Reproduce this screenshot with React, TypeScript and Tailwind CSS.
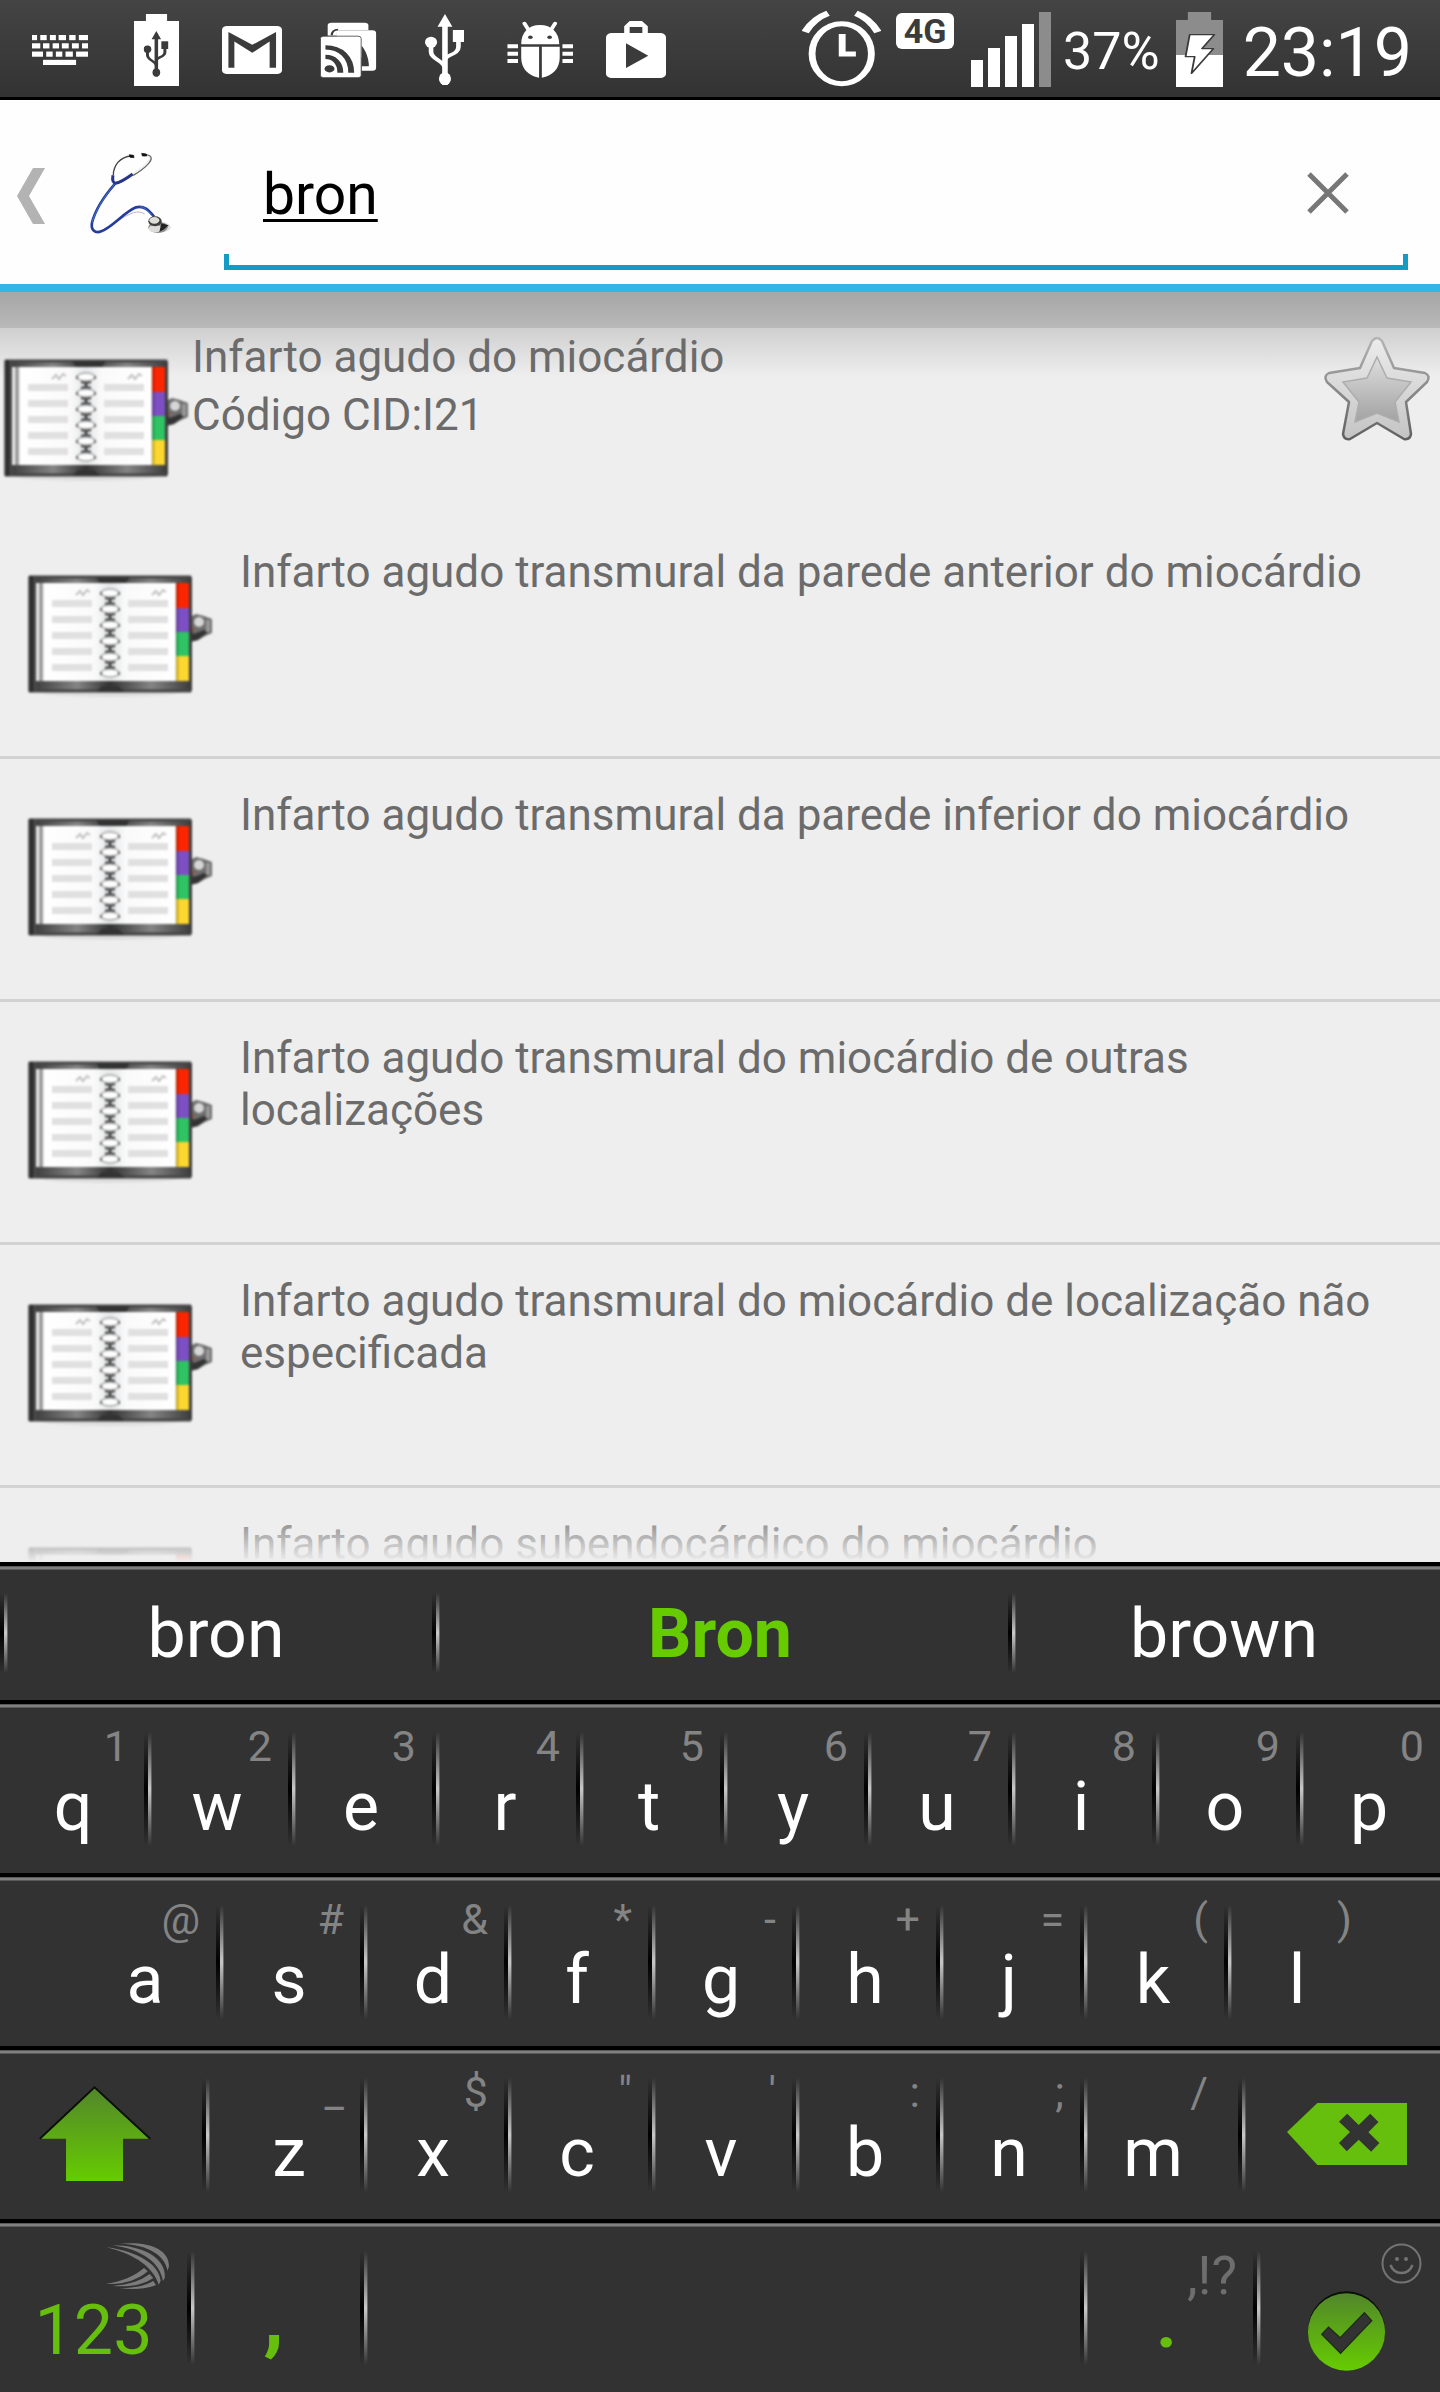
import React from "react";

/* ---------- status bar icons ---------- */

function KeyboardIcon() {
  const rows: [number, number[][]][] = [
    [108, [[70, 81], [88, 102], [109, 122], [128, 144], [151, 165], [172, 192]]],
    [132, [[70, 88], [94, 108], [115, 129], [135, 150], [157, 172], [179, 192]]],
    [156, [[70, 94], [101, 115], [122, 136], [143, 159], [166, 192]]],
    [180, [[94, 166]]],
  ];
  return (
    <svg className="h-[30px] w-14" viewBox="70 108 122 87" preserveAspectRatio="none" fill="#fff" aria-hidden="true">
      {rows.map(([y, keys]) => keys.map(([a, b]) => <rect key={`${y}-${a}`} x={a} y={y} width={b - a} height="15" />))}
    </svg>
  );
}

function UsbShape() {
  return (
    <>
      <path d="M965 45l16 38h-10v175h-12V83h-10z" fill="currentColor" />
      <path d="M935 140v18c0 22 28 28 30 48M994 120v24c0 24-28 22-29 38" fill="none" stroke="currentColor" strokeWidth="10" />
      <ellipse cx="935" cy="130" rx="13" ry="17" fill="currentColor" />
      <rect x="982" y="93" width="24" height="36" fill="currentColor" />
      <ellipse cx="965" cy="239" rx="13" ry="19" fill="currentColor" />
    </>
  );
}

function BatteryUsbIcon() {
  return (
    <svg className="h-[72px] w-[45px]" viewBox="290 39 98 216" preserveAspectRatio="none" aria-hidden="true">
      <path d="M316 39h46v21h26v195h-98V60h26z" fill="#fff" />
      <svg x="311" y="90" width="54" height="137" viewBox="922 45 84 213" preserveAspectRatio="none" color="#3b3b3b">
        <UsbShape />
      </svg>
    </svg>
  );
}

function UsbIcon() {
  return (
    <svg className="h-[71px] w-[39px]" viewBox="922 45 84 213" preserveAspectRatio="none" color="#fff" aria-hidden="true">
      <UsbShape />
    </svg>
  );
}

function MailIcon() {
  return (
    <svg className="h-12 w-[60px]" viewBox="483 78 131 145" preserveAspectRatio="none" aria-hidden="true">
      <rect x="483" y="78" width="131" height="145" rx="11" fill="#fff" />
      <path d="M497 96l52 39 52-39v108h-14v-79l-38 34-39-34v79h-13z" fill="#3b3b3b" />
    </svg>
  );
}

function FeedIcon() {
  return (
    <svg className="h-14 w-[57px]" viewBox="696 68 126 170" preserveAspectRatio="none" aria-hidden="true">
      <path d="M713 110V78q0-8 8-8h74q8 0 8 8v14h-60q-10 0-10 10v8z" fill="#fff" />
      <path d="M722 108c0-10 5-17 14-17" fill="none" stroke="#3b3b3b" strokeWidth="5" />
      <path d="M732 110v-8q0-9 8-9h72q8 0 8 9v105q0 9-8 9h-24v-40z" fill="#fff" />
      <path d="M788 140c10 16 16 40 16 62h-16z" fill="#3b3b3b" />
      <rect x="697" y="111" width="90" height="126" rx="7" fill="#fff" stroke="#3b3b3b" strokeWidth="2" />
      <circle cx="717" cy="210" r="11" fill="#3b3b3b" />
      <path d="M708 174c19 0 33 18 33 48M708 145c34 0 57 30 57 77" fill="none" stroke="#3b3b3b" strokeWidth="13" />
    </svg>
  );
}

function BugIcon() {
  return (
    <svg className="h-[57px] w-[66px]" viewBox="1104 62 144 172" preserveAspectRatio="none" fill="#fff" aria-hidden="true">
      <path d="M1142 69l10 22M1209 69l-10 22" stroke="#fff" strokeWidth="9" strokeLinecap="round" />
      <path d="M1135 132c0-36 16-58 41-58s42 22 42 58zM1135 140h39v93c-24-6-39-28-39-60zM1180 140h39v33c0 32-15 54-39 60z" />
      <circle cx="1155" cy="111" r="5" fill="#3b3b3b" />
      <circle cx="1197" cy="111" r="5" fill="#3b3b3b" />
      {[132, 155, 177].map((y) => (
        <path key={y} d={`M1105 ${y}h23v12h-23zM1225 ${y}h23v12h-23z`} />
      ))}
    </svg>
  );
}

function StoreIcon() {
  return (
    <svg className="h-[57px] w-[60px]" viewBox="1319 60 132 171" preserveAspectRatio="none" aria-hidden="true">
      <path d="M1359 96V76l12-16h27l13 16v20h-12V78h-28v18z" fill="#fff" />
      <rect x="1319" y="96" width="132" height="135" rx="13" fill="#fff" />
      <path d="M1363 127l49 37-49 37z" fill="#3b3b3b" />
    </svg>
  );
}

function AlarmIcon() {
  return (
    <svg className="mt-[10px] h-[77px] w-[79px]" viewBox="174 30 173 231" preserveAspectRatio="none" fill="none" stroke="#fff" aria-hidden="true">
      <ellipse cx="261" cy="161" rx="65" ry="90" strokeWidth="15" />
      <path d="M231 40c-20 10-38 30-50 56M292 40c20 10 36 30 48 56" strokeWidth="17" />
      <path d="M262 102v60h30" strokeWidth="15" />
    </svg>
  );
}

function SignalIcon() {
  return (
    <svg className="mt-3 h-[75px] w-20" viewBox="0 0 80 75" fill="#fff" aria-hidden="true">
      <rect x="0" y="48" width="12" height="27" />
      <rect x="17" y="36" width="12" height="39" />
      <rect x="34" y="24" width="12" height="51" />
      <rect x="51" y="12" width="12" height="63" />
      <rect x="68" y="0" width="12" height="75" fill="#8c8c8c" />
    </svg>
  );
}

function BatteryIcon() {
  return (
    <svg className="mt-3 h-[75px] w-[47px]" viewBox="992 36 103 225" preserveAspectRatio="none" aria-hidden="true">
      <path d="M1018 36h51v24h26v105H992V60h26z" fill="#8c8c8c" />
      <rect x="992" y="165" width="103" height="96" fill="#fff" />
      <path d="M1022 104h54l-27 42h25l-48 74 7-50h-20z" fill="#fff" stroke="#3b3b3b" strokeWidth="4" strokeLinejoin="round" />
    </svg>
  );
}

/* ---------- content icons ---------- */

function Stethoscope() {
  return (
    <svg className="h-[85px] w-[84px]" viewBox="264 152 252 255" fill="none" aria-hidden="true">
      <ellipse cx="484" cy="384" rx="28" ry="15" fill="#000" opacity=".12" />
      <path d="M340 228c0-28 18-56 55-58" stroke="#444" strokeWidth="4" />
      <path d="M432 166c22 0 28 10 14 26-12 14-26 24-46 36" stroke="#666" strokeWidth="4" />
      <path d="M432 170c18-1 20 6 10 18-12 14-24 22-42 34" stroke="#ddd" strokeWidth="2" />
      <path d="M388 166l13 2 1 7-12-1zM425 162l14 2 1 6-13 0z" fill="#111" stroke="#111" strokeWidth="2" />
      <path d="M339 228c-3 16 0 20 7 25M346 252c16-2 30-12 52-28" stroke="#26358a" strokeWidth="9" />
      <path d="M308 392c30-12 56-40 92-52 14-4 24-2 34 4" stroke="#b9b4cc" strokeWidth="3" />
      <path d="M346 252c-28 32-60 78-70 118-4 20 8 34 28 26 36-14 66-56 104-72 24-6 38 8 54 28" stroke="#243c9c" strokeWidth="8" />
      <path d="M344 254c-28 34-58 78-68 116M420 322c16 2 26 14 38 30" stroke="#5b8fd0" strokeWidth="2" />
      <ellipse cx="474" cy="384" rx="29" ry="17" fill="#8b8b88" />
      <ellipse cx="466" cy="388" rx="20" ry="11" fill="#dcdcda" />
      <path d="M484 372l22 6-14 12-14 8z" fill="#222" />
      <ellipse cx="465" cy="366" rx="20" ry="15" fill="#3d3d3d" />
      <ellipse cx="463" cy="363" rx="15" ry="10" fill="#deded8" />
    </svg>
  );
}

function Notebook() {
  const lines = [60, 76, 92, 108, 124];
  const rings = [53, 69, 85, 101, 117, 133];
  return (
    <svg className="h-32 w-48 shrink-0 blur-[1px]" viewBox="0 32 192 128" aria-hidden="true">
      <defs>
        <linearGradient id="cover" x1="0" x2="1" y1="0" y2="0">
          <stop offset="0" stopColor="#333" />
          <stop offset=".3" stopColor="#858585" />
          <stop offset=".5" stopColor="#333" />
          <stop offset=".75" stopColor="#858585" />
          <stop offset="1" stopColor="#3a3a3a" />
        </linearGradient>
        <linearGradient id="page" x1="0" x2="1" y1="0" y2="0">
          <stop offset="0" stopColor="#fff" />
          <stop offset=".38" stopColor="#fafafa" />
          <stop offset=".5" stopColor="#e4e6e8" />
          <stop offset=".62" stopColor="#fafafa" />
          <stop offset="1" stopColor="#fff" />
        </linearGradient>
        <linearGradient id="spine" x1="0" x2="1" y1="0" y2="0">
          <stop offset="0" stopColor="#777" />
          <stop offset=".35" stopColor="#222" />
          <stop offset="1" stopColor="#555" />
        </linearGradient>
      </defs>
      <ellipse cx="86" cy="152" rx="70" ry="5" fill="#dedede" />
      <path d="M164 78l8-4 8 2 8 3v14l-7 3-7 4-8 2z" fill="#6e6e6e" />
      <path d="M166 90l4 4 10-4 4 2-10 8-8 2z" fill="#333" />
      <circle cx="175" cy="82" r="5" fill="#d6d6d6" />
      <path d="M184 80v12" stroke="#999" strokeWidth="4" />
      <path d="M165 86l5 3-5 8z" fill="#a84316" />
      <rect x="4" y="36" width="164" height="116" rx="2" fill="url(#cover)" />
      <path d="M5 37h162M5 151h162" stroke="#444" strokeWidth="3" />
      <rect x="4" y="36" width="8" height="116" rx="2" fill="url(#spine)" />
      <path d="M72 37h34l-4 6H76zM72 152l6-6h16l7 6z" fill="#333" />
      <rect x="12" y="43" width="8" height="98" fill="#e4e4e4" />
      <path d="M17 43v98" stroke="#8d8d8d" strokeWidth="3" />
      <rect x="20" y="43" width="132" height="98" fill="url(#page)" />
      {lines.map((y) => (
        <path key={y} d={`M28 ${y}h40v7h-40zM104 ${y}h40v7h-40z`} fill="#e0e0e0" />
      ))}
      <path d="M52 55l4-4 3 4 4-5 3 2M128 55l4-4 3 4 4-5 3 2" fill="none" stroke="#c0c0c0" strokeWidth="2" />
      {rings.slice(0, 5).map((y) => (
        <path key={y} d={`M86 ${y + 3}v11M81 ${y + 5}h10M81 ${y + 11}h10`} stroke="#444" strokeWidth="3" />
      ))}
      {rings.map((y) => (
        <g key={y}>
          <ellipse cx="86" cy={y} rx="9" ry="4" fill="#fdfdfd" stroke="#a8a8a8" strokeWidth="1.5" />
          <path d={`M77 ${y - 1}v3M95 ${y - 1}v3`} stroke="#666" strokeWidth="2" />
        </g>
      ))}
      <rect x="152" y="43" width="13" height="25" fill="#fb2600" />
      <rect x="152" y="68" width="13" height="24" fill="#7d4fc4" />
      <rect x="152" y="92" width="13" height="24" fill="#2fc463" />
      <rect x="152" y="116" width="13" height="25" fill="#fbd72f" />
      <path d="M153 43v98" stroke="#000" strokeOpacity=".18" strokeWidth="3" />
    </svg>
  );
}

function StarIcon() {
  return (
    <svg className="h-[107px] w-[110px]" viewBox="-2 -2 110 107" aria-hidden="true">
      <defs>
        <linearGradient id="starEdge" x1="0" x2="0" y1="0" y2="1">
          <stop offset="0" stopColor="#b5b5b5" />
          <stop offset="1" stopColor="#606060" />
        </linearGradient>
        <linearGradient id="starRim" x1="0" x2="0" y1="0" y2="1">
          <stop offset="0" stopColor="#ececec" />
          <stop offset="1" stopColor="#c4c4c4" />
        </linearGradient>
        <linearGradient id="starCore" x1="0" x2="0" y1="0" y2="1">
          <stop offset="0" stopColor="#dedede" />
          <stop offset="1" stopColor="#a2a2a2" />
        </linearGradient>
      </defs>
      <path
        d="M48 4q5-6 10 0l12 27 31 5q6 3 2 9L82 65l5 32q-1 6-7 5L53 86l-27 16q-6 1-7-5l6-32L3 45q-4-6 2-9l31-5z"
        fill="url(#starRim)"
        stroke="url(#starEdge)"
        strokeWidth="2.5"
        strokeLinejoin="round"
      />
      <path
        d="M53 20l10 21 24 4-16 20 4 20-22-9-22 9 4-20-16-20 24-4z"
        fill="url(#starCore)"
        stroke="#adadad"
        strokeWidth="1.5"
      />
    </svg>
  );
}

/* ---------- keyboard icons ---------- */

function ShiftIcon() {
  return (
    <svg className="h-24 w-[114px]" viewBox="84 648 248 290" preserveAspectRatio="none" aria-hidden="true">
      <defs>
        <linearGradient id="shift" x1="0" x2="0" y1="0" y2="1">
          <stop offset="0" stopColor="#52862b" />
          <stop offset="1" stopColor="#66cc00" />
        </linearGradient>
      </defs>
      <path d="M207 653l121 154h-59v128H145V807H88z" fill="url(#shift)" />
      <path d="M88 807l119-155 121 155" fill="none" stroke="#0a0f04" strokeWidth="5" />
    </svg>
  );
}

function DeleteIcon() {
  return (
    <svg className="h-[62px] w-[120px]" viewBox="1235 699 261 186" preserveAspectRatio="none" aria-hidden="true">
      <path d="M1301 699h195v186h-195l-66-99z" fill="#66bf0c" />
      <path d="M1366 731l25 34 25-34 18 25-22 31 24 32-18 26-27-36-26 35-17-25 24-33-24-31z" fill="#333" />
    </svg>
  );
}

function SwirlIcon() {
  return (
    <svg className="h-[46px] w-[63px]" viewBox="232 1119 136 138" preserveAspectRatio="none" fill="#7b7b7b" aria-hidden="true">
      <path d="M262 1121c62-8 106 16 106 67l-3 14c-6-46-40-78-103-81z" />
      <path d="M246 1126c68 0 116 40 113 97l-4 10c-6-54-44-94-109-107z" />
      <path d="M233 1132c70 12 114 54 117 100l-4 12c-12-50-48-90-113-112z" />
      <path d="M232 1242c36-8 62-24 82-48l8 10c-22 26-50 40-90 38z" />
      <path d="M246 1248c36-4 62-16 80-36l8 12c-22 20-48 28-88 24z" />
      <path d="M262 1255c36-2 54-8 72-22l6 12c-20 12-46 14-78 10z" />
    </svg>
  );
}

function SmileIcon() {
  return (
    <svg className="h-[41px] w-[41px]" viewBox="0 0 41 41" fill="none" stroke="#747474" strokeWidth="2" aria-hidden="true">
      <circle cx="20.5" cy="20.5" r="19" />
      <path d="M9.5 22c4 10.500 18 10.500 22 0" strokeWidth="2.500" />
      <circle cx="16" cy="16" r="1" />
      <circle cx="25" cy="16" r="1" />
    </svg>
  );
}

function CheckIcon() {
  return (
    <svg className="h-20 w-[79px]" viewBox="1279 1262 172 240" preserveAspectRatio="none" aria-hidden="true">
      <defs>
        <linearGradient id="check" x1="0" x2="0" y1="0" y2="1">
          <stop offset="0" stopColor="#52862b" />
          <stop offset="1" stopColor="#66cc00" />
        </linearGradient>
      </defs>
      <ellipse cx="1365" cy="1381" rx="84" ry="118" fill="#0a0f04" />
      <ellipse cx="1365" cy="1385" rx="84" ry="116" fill="url(#check)" />
      <path d="M1326 1370l25 32 53-75 16 24-68 98-41-57z" fill="#333" stroke="#1c2b10" strokeWidth="3" />
    </svg>
  );
}

/* ---------- keyboard ---------- */

function Separator({ tall = true }: { tall?: boolean }) {
  return (
    <span
      className={
        tall
          ? "col-start-1 row-start-1 mt-7 flex h-[114px] justify-self-start"
          : "col-start-1 row-start-1 mt-[27px] flex h-20 justify-self-start"
      }
    >
      <span className="w-1 bg-linear-to-b from-transparent via-black to-transparent" />
      <span className="w-[3px] bg-linear-to-b from-transparent via-[#c8c8c8] to-transparent" />
      <span className="w-px bg-linear-to-b from-transparent via-[#707070] to-transparent" />
    </span>
  );
}

type KeyProps = {
  label: string;
  hint?: string;
  divider?: boolean;
  className?: string;
};

function Key({ label, hint, divider = true, className = "" }: KeyProps) {
  return (
    <div className={`grid grid-cols-1 grid-rows-1 items-start ${className}`}>
      {divider && <Separator />}
      <button type="button" aria-label={label} className="col-start-1 row-start-1 grid h-full w-full grid-cols-1 grid-rows-1 items-start">
        {hint && (
          <span className="col-start-1 row-start-1 mt-[21px] mr-4 justify-self-end text-[43px] leading-[43px] text-[#848484]">
            {hint}
          </span>
        )}
        <span className="col-start-1 row-start-1 mt-[69px] justify-self-center pl-[2px] text-[68px] leading-[68px] text-white">{label}</span>
      </button>
    </div>
  );
}

const rowBase = "grid border-t-4 border-black bg-[#323232] shadow-[inset_0_1px_#5a5a5a,inset_0_3px_#808080,inset_0_4px_#5a5a5a]";

const topRow = ["q", "w", "e", "r", "t", "y", "u", "i", "o", "p"];
const middleRow = [["a", "@"], ["s", "#"], ["d", "&"], ["f", "*"], ["g", "-"], ["h", "+"], ["j", "="], ["k", "("], ["l", ")"]];
const innerBottom = [["x", "$"], ["c", '"'], ["v", "'"], ["b", ":"], ["n", ";"]];

function Keyboard() {
  return (
    <section aria-label="Keyboard" className="shrink-0 bg-[#323232]">
      <div className={`${rowBase} h-[138px] grid-cols-[3fr_4fr_3fr]`}>
        {["bron", "Bron", "brown"].map((word) => (
          <div key={word} className="grid grid-cols-1 grid-rows-1 items-start">
            <Separator tall={false} />
            <button
              type="button"
              className={
                word === "Bron"
                  ? "col-start-1 row-start-1 mt-[34px] text-[68px] leading-[68px] font-bold text-[#66cc00]"
                  : "col-start-1 row-start-1 mt-[34px] text-[68px] leading-[68px] text-white"
              }
            >
              {word}
            </button>
          </div>
        ))}
      </div>

      <div className={`${rowBase} h-[173px] grid-cols-10`}>
        {topRow.map((k, i) => (
          <Key key={k} label={k} hint={String((i + 1) % 10)} divider={i > 0} />
        ))}
      </div>

      <div className={`${rowBase} h-[173px] grid-cols-9 px-[5%]`}>
        {middleRow.map(([k, h], i) => (
          <Key key={k} label={k} hint={h} divider={i > 0} />
        ))}
      </div>

      <div className={`${rowBase} h-[173px] grid-cols-[202fr_158fr_repeat(5,144fr)_158fr_202fr]`}>
        <button type="button" aria-label="Shift" className="flex items-start justify-center pt-9 pr-3">
          <ShiftIcon />
        </button>
        <Key label="z" hint="_" className="[&>button]:pl-[14px]" />
        {innerBottom.map(([k, h]) => (
          <Key key={k} label={k} hint={h} />
        ))}
        <Key label="m" hint="/" className="[&>button]:pr-[14px]" />
        <div className="grid grid-cols-1 grid-rows-1 items-start">
          <Separator />
          <button type="button" aria-label="Delete" className="col-start-1 row-start-1 mt-[53px] flex justify-center pl-4">
            <DeleteIcon />
          </button>
        </div>
      </div>

      <div className={`${rowBase} h-[173px] grid-cols-[187fr_173fr_720fr_173fr_187fr]`}>
        <button type="button" aria-label="123" className="grid grid-cols-1 grid-rows-1 items-start">
          <span className="col-start-1 row-start-1 mt-5 mr-[18px] justify-self-end">
            <SwirlIcon />
          </span>
          <span className="col-start-1 row-start-1 mt-[72px] justify-self-center text-[70px] leading-[70px] text-[#66bf0c]">123</span>
        </button>
        <div className="grid grid-cols-1 grid-rows-1 items-start">
          <Separator />
          <button type="button" className="col-start-1 row-start-1 mt-[52px] text-[84px] leading-[84px] font-bold text-[#66bf0c]">
            ,
          </button>
        </div>
        <div className="grid grid-cols-1 grid-rows-1 items-start">
          <Separator />
          <button type="button" aria-label="Space" className="col-start-1 row-start-1 h-full" />
        </div>
        <div className="grid grid-cols-1 grid-rows-1 items-start">
          <Separator />
          <button type="button" aria-label="Period" className="col-start-1 row-start-1 grid grid-cols-1 grid-rows-1 items-start">
            <span className="col-start-1 row-start-1 mt-[26px] mr-4 justify-self-end text-[54px] leading-[54px] text-[#6e6e6e]">,!?</span>
            <span className="col-start-1 row-start-1 mt-16 justify-self-center text-[72px] leading-[72px] font-bold text-[#66bf0c]">.</span>
          </button>
        </div>
        <div className="grid grid-cols-1 grid-rows-1 items-start">
          <Separator />
          <button type="button" aria-label="Done" className="col-start-1 row-start-1 grid grid-cols-1 grid-rows-1 items-start">
            <span className="col-start-1 row-start-1 mt-5 mr-[18px] justify-self-end">
              <SmileIcon />
            </span>
            <span className="col-start-1 row-start-1 mt-[68px] justify-self-center">
              <CheckIcon />
            </span>
          </button>
        </div>
      </div>
    </section>
  );
}

/* ---------- page ---------- */

const results = [
  "Infarto agudo transmural da parede anterior do miocárdio",
  "Infarto agudo transmural da parede inferior do miocárdio",
  "Infarto agudo transmural do miocárdio de outras localizações",
  "Infarto agudo transmural do miocárdio de localização não especificada",
  "Infarto agudo subendocárdico do miocárdio",
];

const statusIcons = [KeyboardIcon, BatteryUsbIcon, MailIcon, FeedIcon, UsbIcon, BugIcon, StoreIcon];

function StatusBar() {
  return (
    <div className="flex h-[100px] shrink-0 justify-between border-b-[3px] border-black bg-linear-to-b from-[#444] to-[#333] pr-7 pl-3 text-white">
      <div className="flex items-center pt-[2px]">
        {statusIcons.map((Icon, i) => (
          <span key={i} className="flex w-24 justify-center">
            <Icon />
          </span>
        ))}
      </div>
      <div className="flex items-start">
        <AlarmIcon />
        <span className="mt-[13px] ml-[15px] flex h-9 w-[58px] items-center justify-center rounded-md bg-white text-[34px] leading-9 font-bold text-[#3b3b3b]">
          4G
        </span>
        <span className="ml-[17px]">
          <SignalIcon />
        </span>
        <span className="mt-[26px] ml-3 text-[52px] leading-[52px]">37%</span>
        <span className="ml-4">
          <BatteryIcon />
        </span>
        <span className="mt-[19px] ml-5 text-[68px] leading-[68px]">23:19</span>
      </div>
    </div>
  );
}

function SearchHeader() {
  return (
    <header className="flex h-48 shrink-0 items-center border-b-8 border-[#33b5e5] bg-[#fefefe]">
      <a href="#back" aria-label="Back" className="flex items-center pl-[17px]">
        <svg className="mt-2 h-14 w-7" viewBox="0 0 28 56" fill="#b3b3b3" aria-hidden="true">
          <path d="M16 0h12L12 28l16 28H16L0 28z" />
        </svg>
        <span className="ml-[43px]">
          <Stethoscope />
        </span>
      </a>
      <div className="relative mr-8 ml-[52px] flex h-[170px] flex-1 items-center self-start pr-[59px] pl-[39px]">
        <input
          type="text"
          aria-label="Search"
          defaultValue="bron"
          className="w-full min-w-0 flex-1 bg-transparent pt-5 text-[57px] leading-[68px] text-black underline decoration-[3px] underline-offset-[5px] outline-none"
        />
        <button type="button" aria-label="Clear" className="mt-4">
          <svg className="h-[42px] w-[42px]" viewBox="0 0 42 42" fill="none" stroke="#777" strokeWidth="5" aria-hidden="true">
            <path d="M2 2l38 38M40 2L2 40" />
          </svg>
        </button>
        <span className="pointer-events-none absolute inset-x-0 bottom-0 h-4 border-x-[5px] border-b-[5px] border-[#149bc8]" />
      </div>
    </header>
  );
}

export default function App() {
  return (
    <div className="flex h-screen flex-col overflow-hidden bg-[#eee] font-['Roboto',sans-serif]">
      <StatusBar />
      <SearchHeader />
      <main className="relative min-h-0 flex-1 overflow-hidden text-[#6b6b6b]">
        <div className="h-9 bg-linear-to-b from-[#a6a6a6] to-[#b9b9b9]" />
        <section className="flex h-[188px] items-start bg-[linear-gradient(to_bottom,#cfcfcf,#eee_48px)]">
          <div className="pt-7">
            <Notebook />
          </div>
          <div className="flex-1 text-[44px] leading-[58px]">
            <h1>Infarto agudo do miocárdio</h1>
            <p>Código CID:I21</p>
          </div>
          <button type="button" aria-label="Favorite" className="mt-[7px] mr-2">
            <StarIcon />
          </button>
        </section>
        <ul>
          {results.map((text) => (
            <li key={text} className="flex h-[243px] items-start border-b-[3px] border-[#d2d2d2] px-6">
              <div className="pt-14">
                <Notebook />
              </div>
              <p className="ml-6 flex-1 pt-[30px] text-[44px] leading-[52px]">{text}</p>
            </li>
          ))}
        </ul>
        <div className="pointer-events-none absolute inset-x-0 bottom-0 h-14 bg-linear-to-b from-transparent to-[#eee]" />
      </main>
      <Keyboard />
    </div>
  );
}
